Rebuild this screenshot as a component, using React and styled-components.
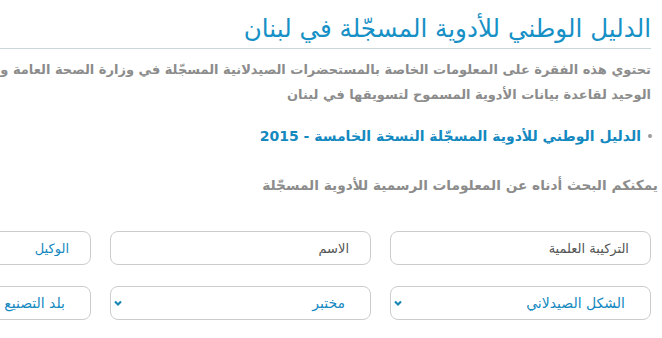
import React from "react";
import styled, { createGlobalStyle } from "styled-components";

const GlobalStyle = createGlobalStyle`
  html, body {
    margin: 0;
    padding: 0;
    background: #ffffff;
  }
  body {
    font-family: "DejaVu Sans", "Noto Sans", sans-serif;
  }
`;

const Viewport = styled.div`
  width: 662px;
  height: 338px;
  overflow: hidden;
  direction: rtl;
`;

const Page = styled.div`
  width: 940px;
  padding-right: 11px;
  box-sizing: border-box;
`;

const Title = styled.h1`
  margin: 0;
  padding: 14px 0 4px;
  font-size: 24.6px;
  font-weight: normal;
  line-height: 30px;
  color: #1690c5;
  border-bottom: 1px solid #c9d6db;
`;

const Intro = styled.p`
  margin: 8px 0 0;
  font-size: 13px;
  font-weight: bold;
  line-height: 25px;
  color: #8c8c8c;
  white-space: nowrap;
`;

const List = styled.ul`
  margin: 17px 0 0;
  padding: 0;
  list-style: none;
`;

const Item = styled.li`
  display: flex;
  align-items: center;
  gap: 7px;
  font-size: 14px;
  font-weight: bold;
  line-height: 24px;
  color: #1489bf;
`;

const Dot = styled.span`
  width: 4px;
  height: 4px;
  border-radius: 50%;
  background: #9a9a9a;
  margin-right: -1px;
  flex-shrink: 0;
`;

const Hint = styled.p`
  margin: 25px -7px 0 0;
  font-size: 13.7px;
  font-weight: bold;
  line-height: 24px;
  color: #8c8c8c;
`;

const Grid = styled.div`
  display: grid;
  grid-template-columns: repeat(3, 261px);
  column-gap: 19px;
  row-gap: 21px;
  margin-top: 34px;
`;

const Field = styled.input`
  height: 34px;
  box-sizing: border-box;
  border: 1px solid #cccccc;
  border-radius: 8px;
  padding: 0 21px;
  font-family: "DejaVu Sans", sans-serif;
  font-size: 13px;
  direction: rtl;
  outline: none;
  background: #fff;

  &::placeholder {
    color: ${(p) => (p.$blue ? "#1489bf" : "#555555")};
    opacity: 1;
  }
`;

const SelectBox = styled.div`
  height: 34px;
  box-sizing: border-box;
  border: 1px solid #cccccc;
  border-radius: 8px;
  padding: 0 25px 0 2px;
  display: flex;
  align-items: center;
  justify-content: space-between;
  font-size: 14px;
  color: #1489bf;
  background: #fff;
`;

const Chevron = () => (
  <svg width="10" height="7" viewBox="0 0 10 7">
    <polyline
      points="2,1.5 5,4.5 8,1.5"
      fill="none"
      stroke="#1b86b6"
      strokeWidth="2.2"
    />
  </svg>
);

const Select = ({ label }) => (
  <SelectBox>
    <span>{label}</span>
    <Chevron />
  </SelectBox>
);

export default function App() {
  return (
    <Viewport>
      <GlobalStyle />
      <Page>
        <Title>الدليل الوطني للأدوية المسجّلة في لبنان</Title>
        <Intro>
          تحتوي هذه الفقرة على المعلومات الخاصة بالمستحضرات الصيدلانية المسجّلة
          في وزارة الصحة العامة وهي المرجع
          <br />
          الوحيد لقاعدة بيانات الأدوية المسموح لتسويقها في لبنان
        </Intro>
        <List>
          <Item>
            <Dot />
            <span>الدليل الوطني  للأدوية المسجّلة النسخة الخامسة - 2015</span>
          </Item>
        </List>
        <Hint>يمكنكم البحث أدناه عن المعلومات الرسمية للأدوية المسجّلة</Hint>
        <Grid>
          <Field placeholder="التركيبة العلمية" />
          <Field placeholder="الاسم" />
          <Field placeholder="الوكيل" $blue />
          <Select label="الشكل الصيدلاني" />
          <Select label="مختبر" />
          <Select label="بلد التصنيع" />
        </Grid>
      </Page>
    </Viewport>
  );
}
